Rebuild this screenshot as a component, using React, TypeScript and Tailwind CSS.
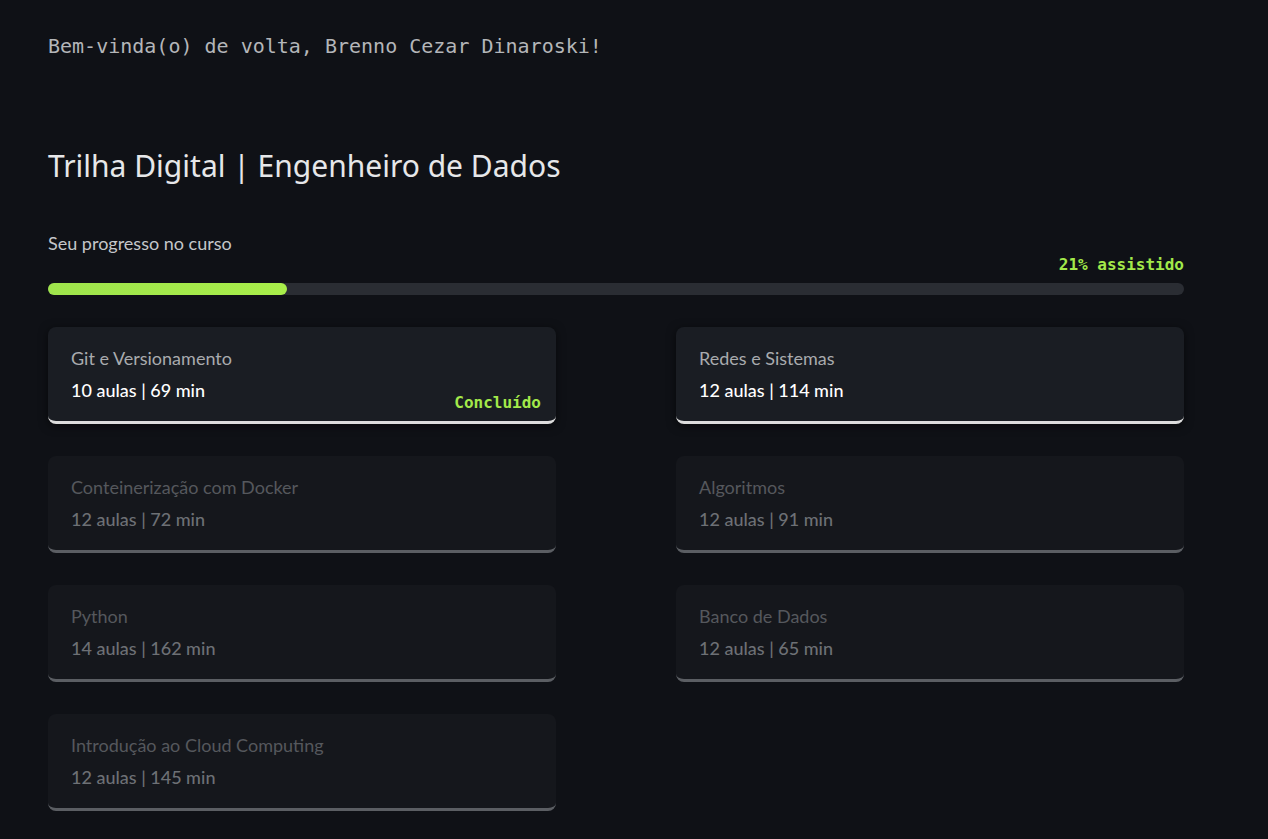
const courses = [
  { title: "Git e Versionamento", lessons: 10, minutes: 69, status: "done" },
  { title: "Redes e Sistemas", lessons: 12, minutes: 114, status: "open" },
  { title: "Conteinerização com Docker", lessons: 12, minutes: 72, status: "locked" },
  { title: "Algoritmos", lessons: 12, minutes: 91, status: "locked" },
  { title: "Python", lessons: 14, minutes: 162, status: "locked" },
  { title: "Banco de Dados", lessons: 12, minutes: 65, status: "locked" },
  { title: "Introdução ao Cloud Computing", lessons: 12, minutes: 145, status: "locked" },
];

const progress = 21;

function CourseCard({
  title,
  lessons,
  minutes,
  status,
}: {
  title: string;
  lessons: number;
  minutes: number;
  status: string;
}) {
  const locked = status === "locked";
  return (
    <div
      className={`relative rounded-lg border-b-[3px] px-[23px] pt-5 pb-5 ${
        locked
          ? "bg-[#15171c] border-[#5b5e63]"
          : "bg-[#1a1d23] border-[#dcdcdc] shadow-[0_2px_10px_rgba(0,0,0,0.55)]"
      }`}
    >
      <p
        className={`text-[18px] leading-[22px] ${
          locked ? "text-[#55585d]" : "text-[#a9abae]"
        }`}
      >
        {title}
      </p>
      <p
        className={`mt-[10px] text-[18px] leading-[22px] font-medium ${
          locked ? "text-[#6d7075]" : "text-white"
        }`}
      >
        {lessons} aulas | {minutes} min
      </p>
      {status === "done" && (
        <span className="absolute right-[15px] bottom-[8px] font-['DejaVu_Sans_Mono',monospace] text-[16px] leading-5 font-bold text-[#a3e94a]">
          Concluído
        </span>
      )}
    </div>
  );
}

export default function App() {
  return (
    <div className="min-h-screen bg-[#0f1116] px-12 pt-[32px] pb-10 font-['Lato',sans-serif]">
      <p className="font-['DejaVu_Sans_Mono','Liberation_Mono',monospace] text-[20px] leading-7 text-[#b4b6b9]">
        Bem-vinda(o) de volta, Brenno Cezar Dinaroski!
      </p>

      <div className="w-[1136px]">
        <h1 className="mt-[86px] font-['Noto_Sans',sans-serif] text-[30px] leading-10 text-[#e6e7e9]">
          Trilha Digital | Engenheiro de Dados
        </h1>

        <p className="mt-[46px] text-[18px] leading-[22px] text-[#c5c7ca]">
          Seu progresso no curso
        </p>
        <p className="mt-[1px] text-right font-['DejaVu_Sans_Mono',monospace] text-[16px] leading-5 font-bold text-[#a3e94a]">
          {progress}% assistido
        </p>

        <div className="mt-[8px] h-3 rounded-full bg-[#2a2d33]">
          <div
            className="h-3 rounded-full bg-gradient-to-r from-[#9ee44c] to-[#a8ee4a]"
            style={{ width: `${progress}%` }}
          />
        </div>

        <div className="mt-8 grid grid-cols-2 gap-x-[120px] gap-y-[32px]">
          {courses.map((c) => (
            <CourseCard key={c.title} {...c} />
          ))}
        </div>
      </div>
    </div>
  );
}
